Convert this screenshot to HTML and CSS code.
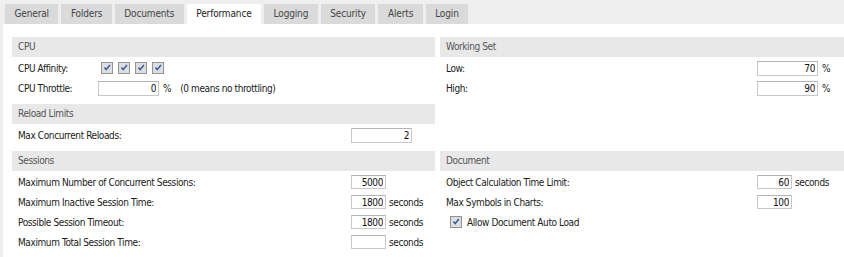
FILE: index.html
```html
<!DOCTYPE html>
<html lang="en">
<head>
    <meta charset="UTF-8">
    <title>Performance</title>
    <link rel="stylesheet" href="styles.css">
</head>
<body>

<!-- Tab strip -->
<div class="tabs">
    <a class="tab">General</a>
    <a class="tab">Folders</a>
    <a class="tab">Documents</a>
    <a class="tab active">Performance</a>
    <a class="tab">Logging</a>
    <a class="tab">Security</a>
    <a class="tab">Alerts</a>
    <a class="tab">Login</a>
</div>

<div class="panel">
    <div class="col">
        <div class="section">
            <div class="section-head">CPU</div>
            <div class="section-body">
                <div class="row">
                    <span class="label label-cpu">CPU Affinity:</span>
                    <span class="checks">
                        <span class="check"><svg viewBox="0 0 12 12"><path d="M3 5.5 L5 8 L9.5 2.5" /></svg></span>
                        <span class="check"><svg viewBox="0 0 12 12"><path d="M3 5.5 L5 8 L9.5 2.5" /></svg></span>
                        <span class="check"><svg viewBox="0 0 12 12"><path d="M3 5.5 L5 8 L9.5 2.5" /></svg></span>
                        <span class="check"><svg viewBox="0 0 12 12"><path d="M3 5.5 L5 8 L9.5 2.5" /></svg></span>
                    </span>
                </div>
                <div class="row">
                    <span class="label label-cpu">CPU Throttle:</span>
                    <input class="field field-wide" type="text" value="0">
                    <span class="unit unit-pct">%</span>
                    <span class="note">(0 means no throttling)</span>
                </div>
            </div>
        </div>

        <div class="section">
            <div class="section-head">Reload Limits</div>
            <div class="section-body">
                <div class="row">
                    <span class="label label-left">Max Concurrent Reloads:</span>
                    <input class="field field-wide" type="text" value="2">
                </div>
            </div>
        </div>
    </div>

    <div class="col">
        <div class="section">
            <div class="section-head">Working Set</div>
            <div class="section-body">
                <div class="row">
                    <span class="label label-right">Low:</span>
                    <input class="field field-wide" type="text" value="70">
                    <span class="unit unit-pct">%</span>
                </div>
                <div class="row">
                    <span class="label label-right">High:</span>
                    <input class="field field-wide" type="text" value="90">
                    <span class="unit unit-pct">%</span>
                </div>
            </div>
        </div>
    </div>

    <div class="col">
        <div class="section">
            <div class="section-head">Sessions</div>
            <div class="section-body">
                <div class="row">
                    <span class="label label-left">Maximum Number of Concurrent Sessions:</span>
                    <input class="field" type="text" value="5000">
                </div>
                <div class="row">
                    <span class="label label-left">Maximum Inactive Session Time:</span>
                    <input class="field" type="text" value="1800">
                    <span class="unit">seconds</span>
                </div>
                <div class="row">
                    <span class="label label-left">Possible Session Timeout:</span>
                    <input class="field" type="text" value="1800">
                    <span class="unit">seconds</span>
                </div>
                <div class="row">
                    <span class="label label-left">Maximum Total Session Time:</span>
                    <input class="field" type="text" value="">
                    <span class="unit">seconds</span>
                </div>
            </div>
        </div>
    </div>

    <div class="col">
        <div class="section">
            <div class="section-head">Document</div>
            <div class="section-body">
                <div class="row">
                    <span class="label label-right">Object Calculation Time Limit:</span>
                    <input class="field" type="text" value="60">
                    <span class="unit">seconds</span>
                </div>
                <div class="row">
                    <span class="label label-right">Max Symbols in Charts:</span>
                    <input class="field" type="text" value="100">
                </div>
                <div class="row row-check">
                    <span class="check"><svg viewBox="0 0 12 12"><path d="M3 5.5 L5 8 L9.5 2.5" /></svg></span>
                    <span class="check-label">Allow Document Auto Load</span>
                </div>
            </div>
        </div>
    </div>
</div>

</body>
</html>
```

FILE: styles.css
```css
body {
    margin: 0;
    font-family: 'DejaVu Sans Condensed', 'DejaVu Sans', sans-serif;
    font-size: 10px;
    letter-spacing: -0.4px;
    color: #1a1a1a;
    background-color: #efefef;
    height: 257px;
    display: flex;
    flex-direction: column;
}

/* Tabs */
.tabs {
    display: flex;
    gap: 3px;
    padding: 4px 0 0 5px;
}

.tab {
    height: 20px;
    line-height: 20px;
    padding: 0 9.5px;
    letter-spacing: -0.15px;
    background-color: #dadada;
    color: #444;
    cursor: pointer;
}

.tab.active {
    background-color: #fff;
    color: #222;
}

/* Main panel */
.panel {
    flex: 1;
    margin-left: 3px;
    background-color: #fff;
    padding: 13px 0 0 9px;
    display: grid;
    grid-template-columns: 423px 1fr;
    column-gap: 5px;
    align-content: start;
}

.section-head {
    height: 20px;
    line-height: 20px;
    padding-left: 6px;
    background-color: #e8e8e8;
    color: #555;
}

.section-body {
    padding: 1px 0 6px 6px;
}

.row {
    display: flex;
    align-items: center;
    height: 20px;
}

.label {
    flex-shrink: 0;
}

.label-cpu {
    width: 80px;
}

.label-left {
    width: 333px;
}

.label-right {
    width: 311px;
}

.checks {
    display: flex;
    gap: 5px;
    margin-left: 3px;
}

.check {
    width: 12px;
    height: 12px;
    box-sizing: border-box;
    border: 1px solid #939393;
    background-color: #dedede;
    display: flex;
}

.check svg {
    width: 10px;
    height: 10px;
    fill: none;
    stroke: #2f58a8;
    stroke-width: 1.8;
}

.field {
    width: 35px;
    height: 14px;
    box-sizing: border-box;
    border: 1px solid #c8c8c8;
    border-top-color: #b4b4b4;
    padding: 0 2px 0 0;
    margin: 0;
    font-family: inherit;
    font-size: 10px;
    letter-spacing: inherit;
    color: #111;
    text-align: right;
    outline: none;
}

.field-wide {
    width: 61px;
    height: 15px;
}

.unit {
    margin-left: 3px;
}

.unit-pct {
    margin-left: 4px;
}

.note {
    margin-left: 9px;
}

.row-check {
    padding-left: 4px;
}

.check-label {
    margin-left: 5px;
}
```
